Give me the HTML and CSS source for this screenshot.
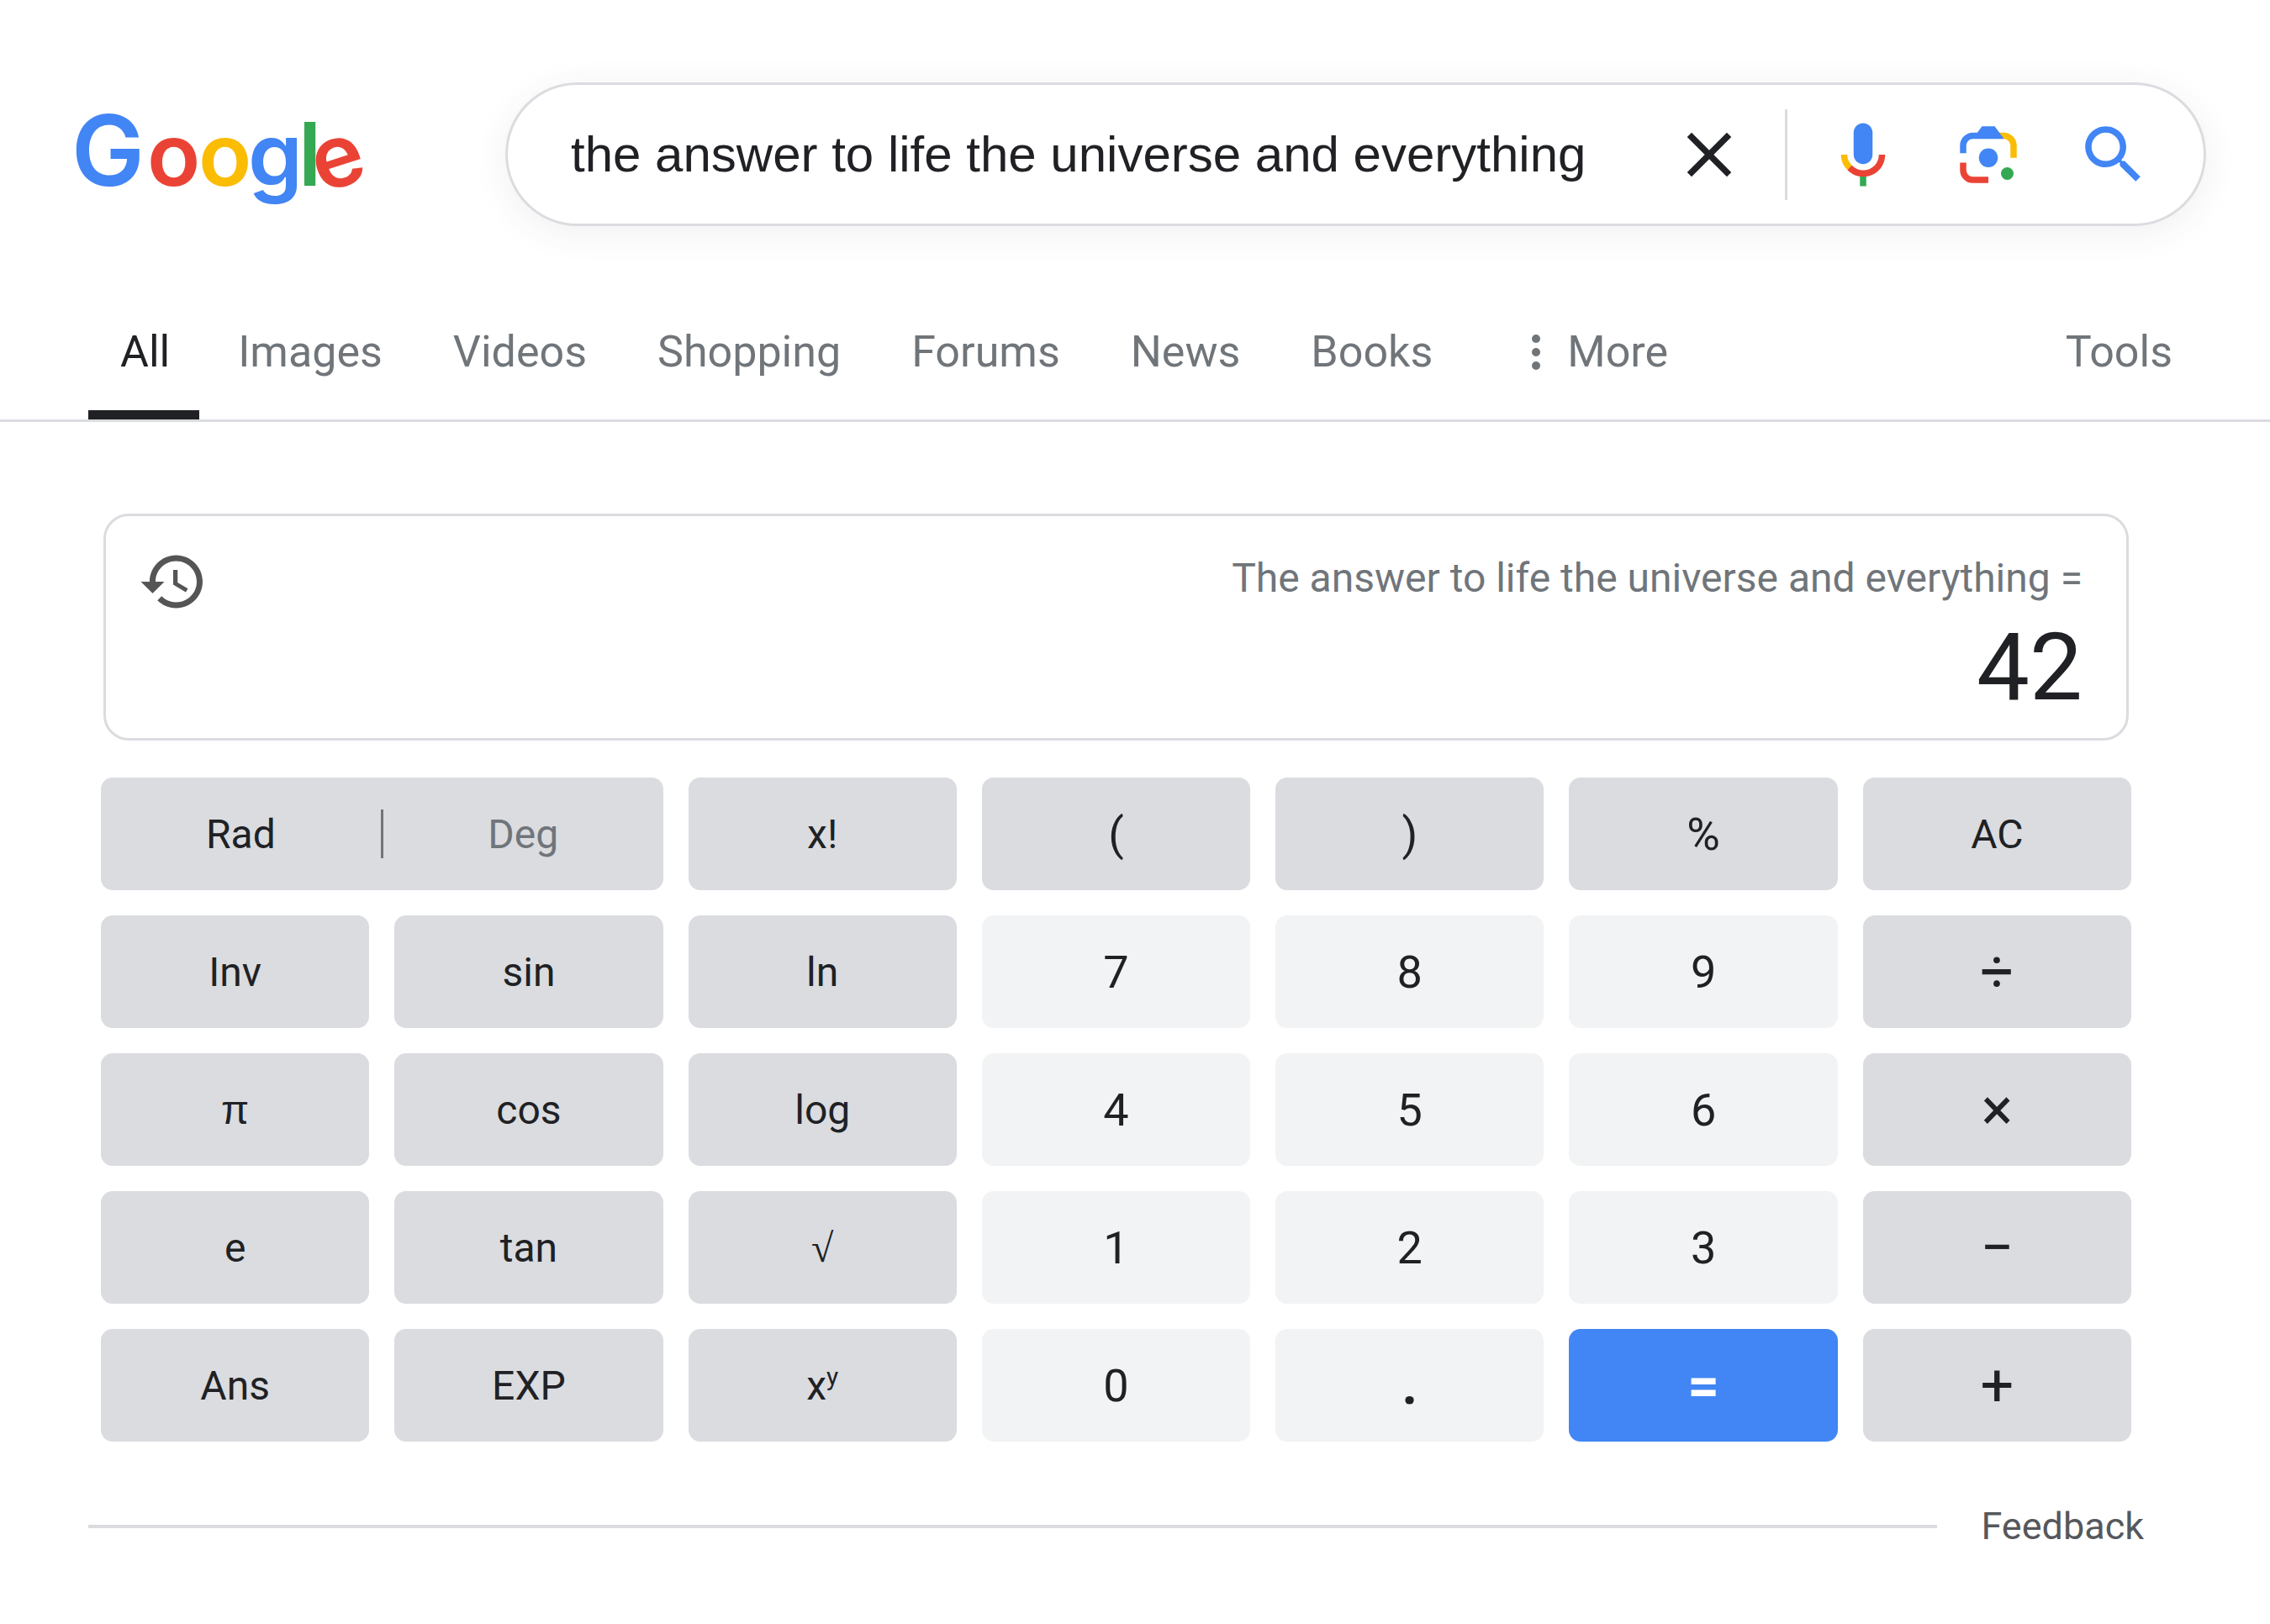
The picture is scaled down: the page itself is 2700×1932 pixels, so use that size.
FILE: index.html
```html
<!DOCTYPE html>
<html lang="en">
<head>
    <meta charset="UTF-8">
    <meta name="viewport" content="width=device-width, initial-scale=1.0">
    <title>the answer to life the universe and everything - Google Search</title>
    <link rel="stylesheet" href="styles.css">
</head>
<body>
    <header class="header">
        <a class="logo" href="#" aria-label="Google">
            <svg viewBox="-8 0 356 160" width="356" height="160">
                <text class="logo-text" x="-7 83 144 203 263 290" y="117 117 117 117 117 126" rotate="0 0 0 0 0 -18"><tspan class="logo-cap" fill="#4285f4">G</tspan><tspan fill="#ea4335">o</tspan><tspan fill="#fbbc04">o</tspan><tspan fill="#4285f4">g</tspan><tspan fill="#34a853">l</tspan><tspan fill="#ea4335">e</tspan></text>
            </svg>
        </a>
        <form class="search-box">
            <input class="search-input" type="text" aria-label="Search" value="the answer to life the universe and everything">
            <button class="icon-button" type="reset" aria-label="Clear">
                <svg viewBox="0 0 24 24" fill="#202124"><path d="M19 6.41L17.59 5 12 10.59 6.41 5 5 6.41 10.59 12 5 17.59 6.41 19 12 13.41 17.59 19 19 17.59 13.41 12z"/></svg>
            </button>
            <span class="search-divider"></span>
            <div class="search-tools">
                <button class="icon-button" type="button" aria-label="Search by voice">
                    <svg viewBox="0 0 24 24">
                        <path fill="#4285f4" d="M12 15c1.66 0 3-1.31 3-2.97V5.01C15 3.35 13.66 2 12 2S9 3.34 9 5.01v7.02C9 13.69 10.34 15 12 15z"/>
                        <path fill="#34a853" d="M11 18.08h2V22h-2z"/>
                        <path fill="#fbbc04" d="M7.05 16.87C5.78 15.54 5 14.04 5 12h2c0 1.45.56 2.42 1.47 3.38v.32l-1.15 1.18z"/>
                        <path fill="#ea4335" d="M12 16.93a4.97 5.25 0 0 1-3.54-1.55l-1.41 1.49C8.31 18.21 10.07 19 12 19c3.87 0 6.99-2.92 6.99-7H17c0 2.92-2.24 4.93-5 4.93z"/>
                    </svg>
                </button>
                <button class="icon-button" type="button" aria-label="Search by image">
                    <svg viewBox="0 0 192 192">
                        <circle fill="#34a853" cx="144" cy="144" r="16"/>
                        <circle fill="#4285f4" cx="96" cy="104" r="24"/>
                        <path fill="#ea4335" d="M24 135.2c0 18.11 14.69 32.8 32.8 32.8H96v-16l-40.1-.1c-8.8 0-15.9-8.19-15.9-17.9v-18H24v19.2z"/>
                        <path fill="#fbbc04" d="M168 72.8c0-18.11-14.69-32.8-32.8-32.8H116l20 16c8.8 0 16 8.29 16 18v30h16V72.8z"/>
                        <path fill="#4285f4" d="M112 24H80L68 40H56.8C38.69 40 24 54.69 24 72.8V92h16V74c0-9.71 7.2-18 16-18h80l-24-32z"/>
                    </svg>
                </button>
                <button class="icon-button" type="submit" aria-label="Search">
                    <svg viewBox="0 0 24 24" fill="#4285f4"><path d="M15.5 14h-.79l-.28-.27C15.41 12.59 16 11.11 16 9.5 16 5.91 13.09 3 9.5 3S3 5.91 3 9.5 5.91 16 9.5 16c1.61 0 3.09-.59 4.23-1.57l.27.28v.79l5 4.99L20.49 19l-4.99-5zm-6 0C7.01 14 5 11.99 5 9.5S7.01 5 9.5 5 14 7.01 14 9.5 11.99 14 9.5 14z"/></svg>
                </button>
            </div>
        </form>
    </header>

    <nav class="tabs">
        <a class="tab active" href="#">All</a>
        <a class="tab" href="#">Images</a>
        <a class="tab" href="#">Videos</a>
        <a class="tab" href="#">Shopping</a>
        <a class="tab" href="#">Forums</a>
        <a class="tab" href="#">News</a>
        <a class="tab" href="#">Books</a>
        <button class="tab more" type="button">
            <svg class="dots" viewBox="0 0 10 42" fill="currentColor"><circle cx="5" cy="5" r="5"/><circle cx="5" cy="21" r="5"/><circle cx="5" cy="37" r="5"/></svg>
            More
        </button>
        <button class="tab tools" type="button">Tools</button>
    </nav>

    <main class="calculator">
        <div class="display">
            <button class="history" type="button" aria-label="History">
                <svg viewBox="0 0 24 24" fill="#555"><path d="M13 3c-4.97 0-9 4.03-9 9H1l3.89 3.89.07.14L9 12H6c0-3.87 3.13-7 7-7s7 3.13 7 7-3.13 7-7 7c-1.93 0-3.68-.79-4.94-2.06l-1.42 1.42C8.27 19.99 10.51 21 13 21c4.97 0 9-4.03 9-9s-4.03-9-9-9zm-1 5v5l4.28 2.54.72-1.21-3.5-2.08V8H12z"/></svg>
            </button>
            <div class="output">
                <div class="expression">The answer to life the universe and everything =</div>
                <div class="result">42</div>
            </div>
        </div>

        <div class="keys">
            <div class="key-switch">
                <button class="switch-option" type="button">Rad</button>
                <span class="switch-divider"></span>
                <button class="switch-option off" type="button">Deg</button>
            </div>
            <button class="key">x!</button>
            <button class="key symbol">(</button>
            <button class="key symbol">)</button>
            <button class="key symbol">%</button>
            <button class="key">AC</button>

            <button class="key">Inv</button>
            <button class="key">sin</button>
            <button class="key">ln</button>
            <button class="key number">7</button>
            <button class="key number">8</button>
            <button class="key number">9</button>
            <button class="key operator">÷</button>

            <button class="key pi">π</button>
            <button class="key">cos</button>
            <button class="key">log</button>
            <button class="key number">4</button>
            <button class="key number">5</button>
            <button class="key number">6</button>
            <button class="key operator">×</button>

            <button class="key">e</button>
            <button class="key">tan</button>
            <button class="key root">√</button>
            <button class="key number">1</button>
            <button class="key number">2</button>
            <button class="key number">3</button>
            <button class="key operator">−</button>

            <button class="key">Ans</button>
            <button class="key">EXP</button>
            <button class="key"><span>x<sup>y</sup></span></button>
            <button class="key number">0</button>
            <button class="key number point">.</button>
            <button class="key equals">=</button>
            <button class="key operator">+</button>
        </div>
    </main>

    <footer class="footer">
        <span class="footer-line"></span>
        <a class="feedback" href="#">Feedback</a>
    </footer>
</body>
</html>
```
FILE: styles.css
```css
* {
    box-sizing: border-box;
}
body {
    margin: 0;
    background-color: #fff;
    color: #202124;
    font-family: Roboto, "Liberation Sans", sans-serif;
}
button {
    margin: 0;
    padding: 0;
    border: none;
    background: none;
    color: inherit;
    font-family: inherit;
    cursor: pointer;
}
a {
    color: inherit;
    text-decoration: none;
}
svg {
    display: block;
}

/* Header */
.header {
    display: flex;
    align-items: center;
    padding: 98px 76px 0 84px;
}
.logo {
    flex: none;
    margin-right: 161px;
}
.logo svg {
    overflow: visible;
}
.logo-text {
    font-family: Inter, sans-serif;
    font-size: 104px;
    font-weight: 600;
}
.logo-cap {
    font-size: 116px;
}
.search-box {
    display: flex;
    flex: 1;
    align-items: center;
    height: 171px;
    padding: 0 62px 0 75px;
    border: 3px solid #dadce0;
    border-radius: 86px;
    box-shadow: 0 8px 40px rgba(60, 64, 67, 0.08);
}
.search-input {
    flex: 1;
    min-width: 0;
    padding: 0;
    border: none;
    outline: none;
    background: none;
    color: #202124;
    font-family: "Liberation Sans", Arial, sans-serif;
    font-size: 60px;
}
.icon-button {
    flex: none;
    width: 90px;
    height: 90px;
}
.search-divider {
    width: 3px;
    height: 108px;
    margin: 0 45px;
    background-color: #dadce0;
}
.search-tools {
    display: flex;
    gap: 59px;
}

/* Tabs */
.tabs {
    display: flex;
    gap: 8px;
    margin-top: 120px;
    padding: 0 78px 0 105px;
    border-bottom: 3px solid #dadce0;
}
.tab {
    padding: 0 38px 39px;
    border-bottom: 11px solid transparent;
    color: #70757a;
    font-size: 52px;
    line-height: 60px;
}
.tab.active {
    padding-right: 35px;
    border-bottom-color: #202124;
    color: #202124;
}
.more {
    display: flex;
    align-items: center;
    gap: 32px;
    margin-left: 34px;
}
.dots {
    width: 10px;
    height: 42px;
}
.tools {
    margin-left: auto;
}

/* Calculator */
.calculator {
    margin: 109px 165px 0 120px;
}
.display {
    display: flex;
    align-items: flex-start;
    justify-content: space-between;
    margin: 0 3px 44px;
    padding: 36px 52px 16px 38px;
    border: 3px solid #dadce0;
    border-radius: 30px;
}
.history {
    width: 84px;
    height: 84px;
}
.output {
    text-align: right;
}
.expression {
    color: #70757a;
    font-size: 48px;
    line-height: 76px;
}
.result {
    font-size: 112px;
    line-height: 136px;
}
.keys {
    display: grid;
    grid-template-columns: repeat(7, 1fr);
    grid-auto-rows: 134px;
    gap: 30px;
}
.key,
.key-switch {
    border-radius: 14px;
    background-color: #dadce0;
    font-size: 48px;
}
.key-switch {
    display: flex;
    grid-column: span 2;
    align-items: center;
}
.switch-option {
    flex: 1;
    align-self: stretch;
    font-size: 48px;
}
.switch-option.off {
    color: #70757a;
}
.switch-divider {
    width: 3px;
    height: 58px;
    background-color: #70757a;
}
.key sup {
    font-size: 30px;
    line-height: 0;
}
.key.symbol {
    font-size: 54px;
}
.key.pi {
    font-family: "Liberation Sans", Arial, sans-serif;
}
.key.root {
    font-family: "Liberation Serif", serif;
}
.key.number {
    background-color: #f1f3f4;
    font-size: 54px;
}
.key.operator {
    font-size: 70px;
}
.key.point {
    font-size: 64px;
    font-weight: 700;
}
.key.equals {
    background-color: #4285f4;
    color: #fff;
    font-size: 66px;
    font-weight: 700;
}

/* Footer */
.footer {
    display: flex;
    align-items: center;
    gap: 52px;
    margin-top: 71px;
    padding: 0 150px 60px 105px;
}
.footer-line {
    flex: 1;
    height: 4px;
    background-color: #dadce0;
}
.feedback {
    color: #55585c;
    font-size: 45px;
    line-height: 60px;
}
```
